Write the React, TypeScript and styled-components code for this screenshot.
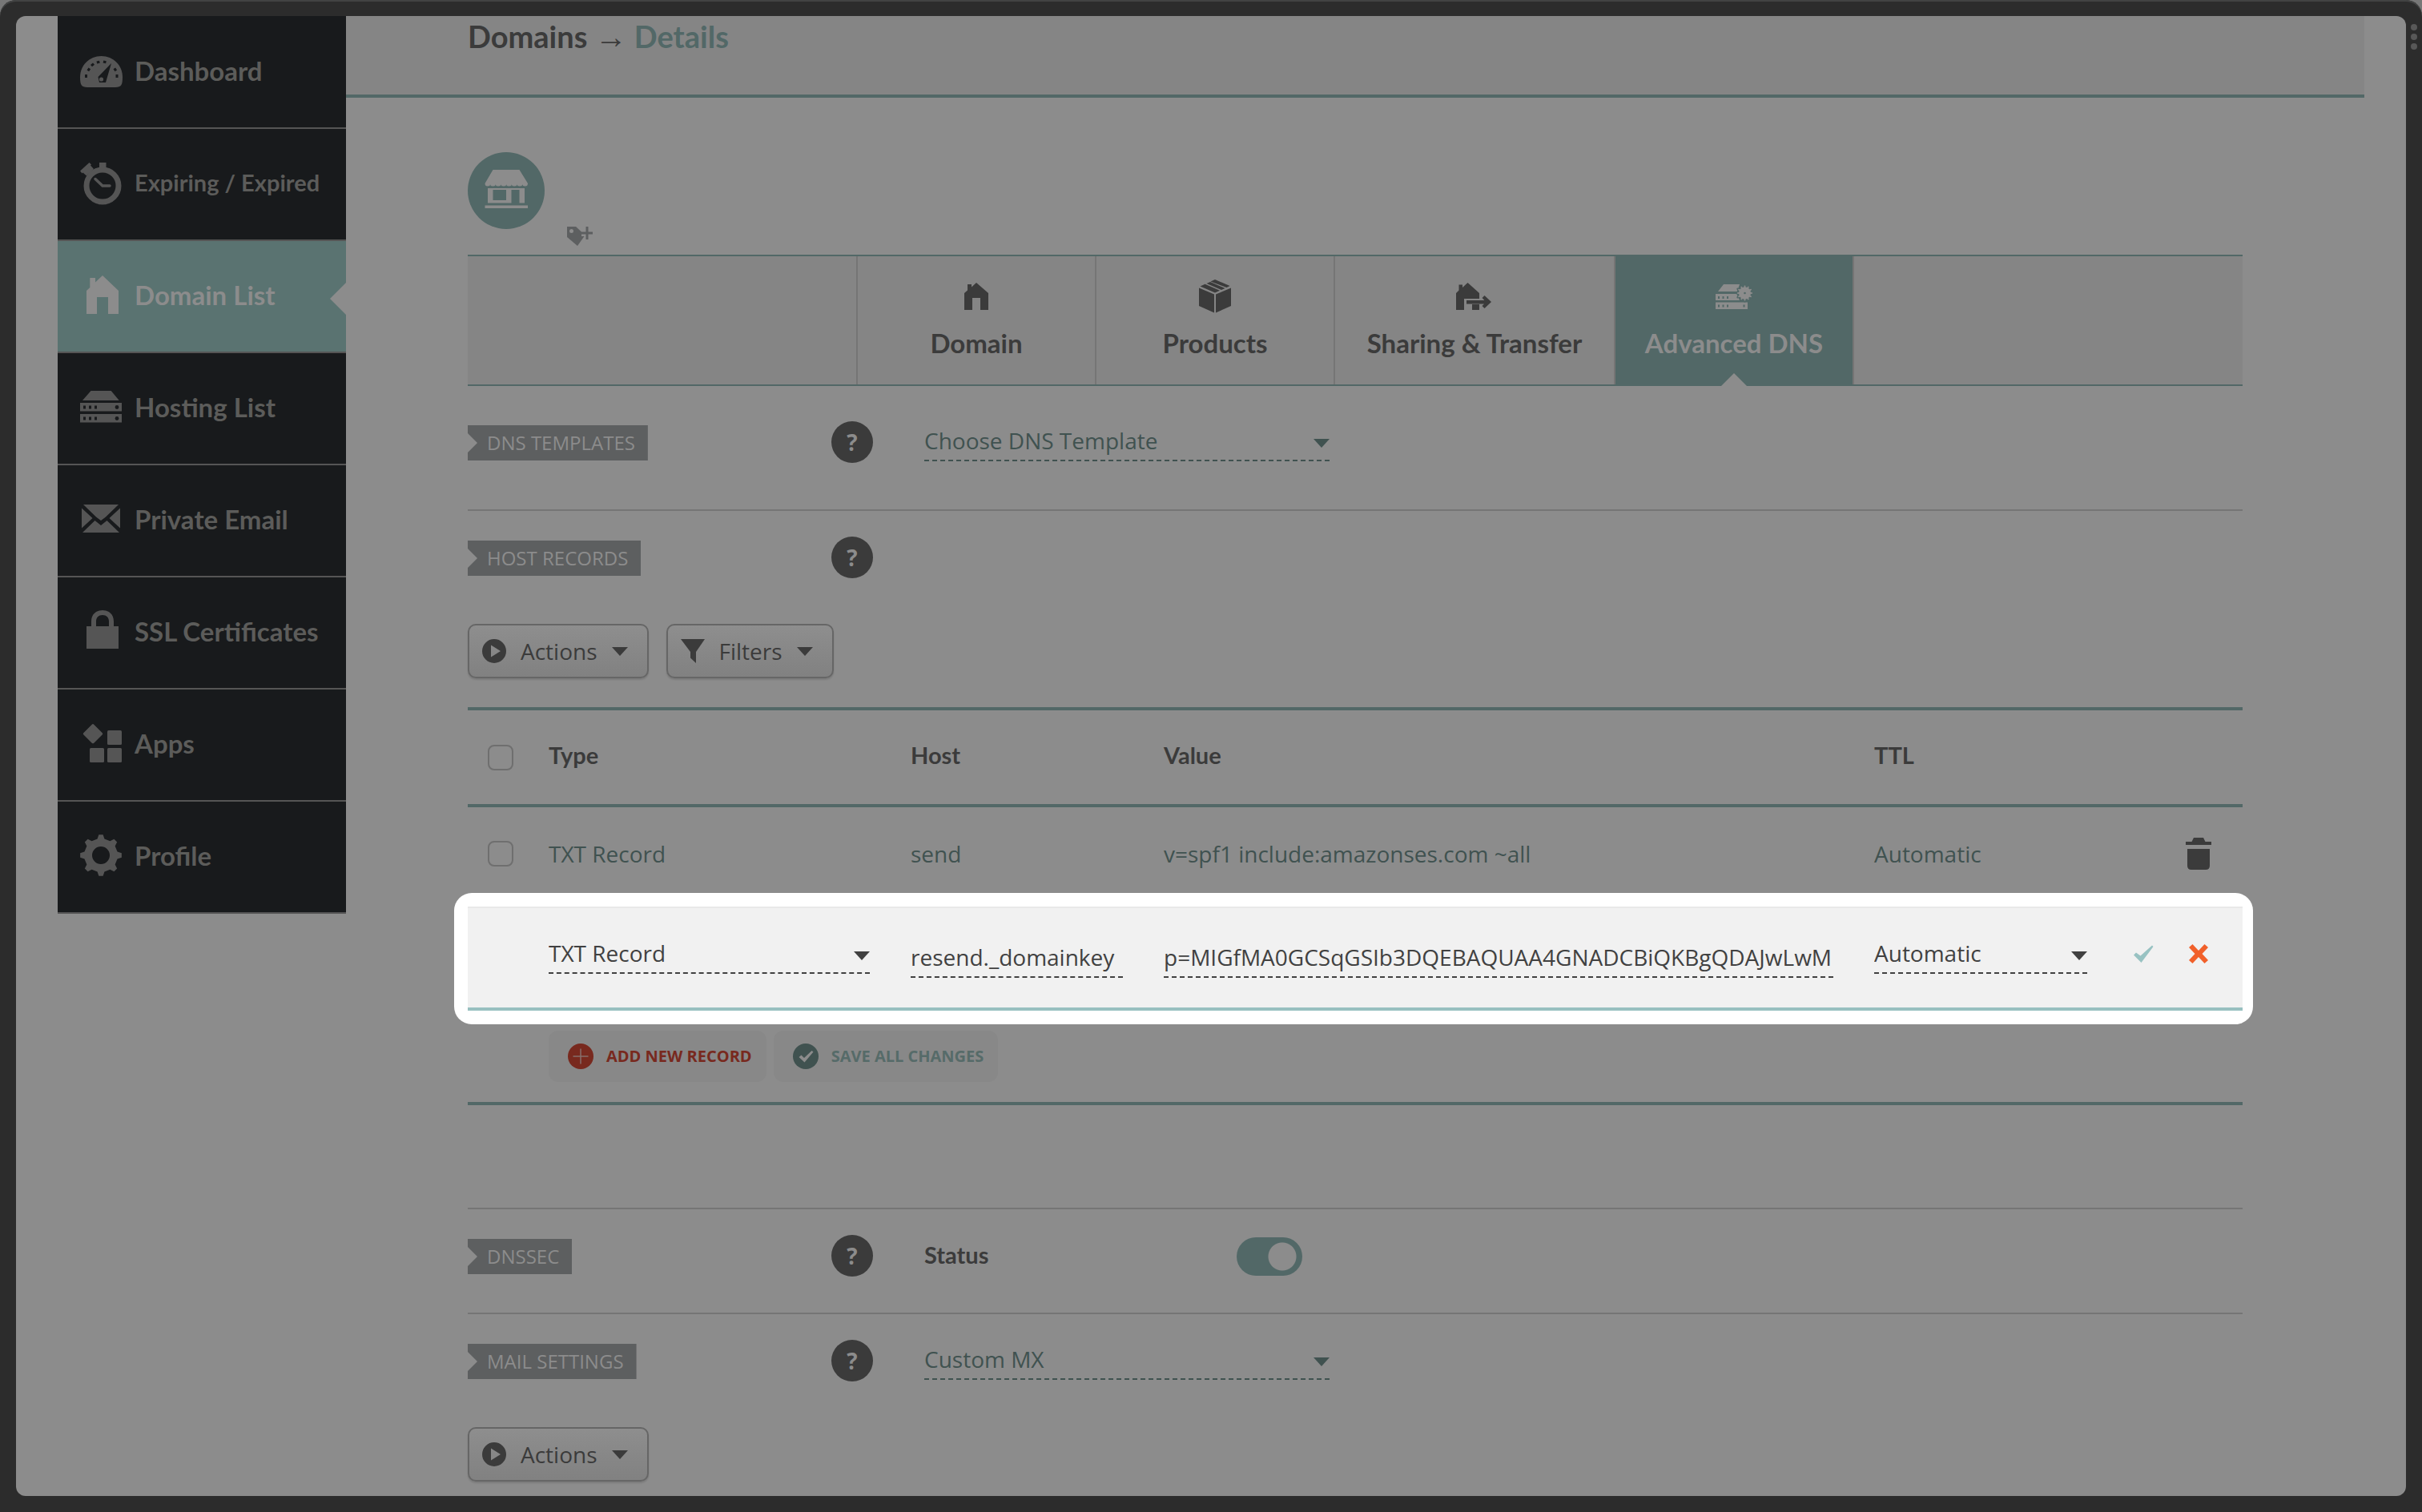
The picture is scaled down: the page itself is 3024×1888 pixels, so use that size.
import React from "react";
import styled, { createGlobalStyle, css } from "styled-components";

const color = {
  frame: "#2c2c2c",
  page: "#8c8c8c",
  band: "#858585",
  rule: "#757575",
  teal: "#526867",
  tealText: "#405250",
  ink: "#3b3b3b",
  tag: "#5d5f60",
  nav: "#181a1c",
  navText: "#5c5c5a",
  navIcon: "#555555",
};

const displayFont = `Lato, "Open Sans", sans-serif`;

const GlobalStyle = createGlobalStyle`
  *, *::before, *::after { box-sizing: border-box; }
  body {
    margin: 0;
    background: #777777;
    color: ${color.ink};
    font-family: "Open Sans", "Noto Sans", sans-serif;
    font-size: 28px;
    line-height: 40px;
  }
  button, input, select { font: inherit; color: inherit; margin: 0; }
`;

/* ---------- window ---------- */

const Frame = styled.div`
  position: relative;
  min-height: 100vh;
  display: flex;
  padding: 20px;
  background: ${color.frame};
  border-radius: 20px 20px 0 0;
  box-shadow: inset 0 2px 0 #424343;
`;

const FrameDots = styled.svg`
  position: absolute;
  top: 28px;
  right: 5px;
  width: 10px;
  height: 36px;
  fill: #585858;
`;

const Page = styled.div`
  flex: 1;
  display: flex;
  align-items: flex-start;
  padding: 0 52px;
  background: ${color.page};
  border-radius: 12px;
  overflow: hidden;
`;

/* ---------- sidebar ---------- */

const Sidebar = styled.nav`
  flex: none;
  width: 360px;
  padding-top: 1px;
  background: ${color.nav};
`;

const NavLink = styled.a<{ $active?: boolean; $small?: boolean }>`
  position: relative;
  display: flex;
  align-items: center;
  gap: 14px;
  height: 140px;
  padding-left: 26px;
  border-bottom: 2px solid ${color.navIcon};
  background: ${(p) => (p.$active ? "#5a7371" : color.nav)};
  color: ${(p) => (p.$active ? color.page : color.navText)};
  font-family: ${displayFont};
  font-size: ${(p) => (p.$small ? 29 : 33)}px;
  font-weight: 700;
  text-decoration: none;
  white-space: nowrap;

  svg {
    flex: none;
    width: 56px;
    height: 56px;
    fill: ${(p) => (p.$active ? color.page : color.navIcon)};
    --cut: ${(p) => (p.$active ? "#5a7371" : color.nav)};
  }

  ${(p) =>
    p.$active &&
    css`
      &::after {
        content: "";
        position: absolute;
        right: 0;
        top: 52px;
        border: 20px solid transparent;
        border-right-color: ${color.page};
        border-left-width: 0;
      }
    `}
`;

const DisplayLabel = styled.span`
  padding-bottom: 4px;
`;

/* ---------- main column ---------- */

const Main = styled.main`
  flex: 1;
  min-width: 0;
`;

const TitleBar = styled.header`
  padding: 5px 152px 53px;
  background: ${color.band};
  border-bottom: 4px solid ${color.teal};
`;

const Title = styled.h1`
  margin: 0;
  font-family: ${displayFont};
  font-size: 38px;
  line-height: 40px;
  font-weight: 700;

  span {
    font-family: "Liberation Sans", sans-serif;
    font-size: 40px;
    line-height: 0;
    font-weight: 400;
  }
  em {
    font-style: normal;
    color: ${color.teal};
  }
`;

const Content = styled.div`
  padding: 0 152px 17px;
`;

const DomainHead = styled.div`
  display: flex;
  align-items: flex-end;
  gap: 28px;
  padding: 68px 0 11px;
`;

const StoreIcon = styled.svg`
  width: 96px;
  height: 96px;
  margin-bottom: 21px;
  fill: ${color.page};
`;

const TagButton = styled.button`
  display: flex;
  padding: 0;
  border: 0;
  background: none;

  svg {
    width: 32px;
    height: 24px;
    fill: ${color.tag};
  }
`;

const Tabs = styled.nav`
  display: grid;
  grid-template-columns: 298px 298px 350px 300px;
  justify-content: center;
  background: ${color.band};
  border-top: 2px solid ${color.teal};
  border-bottom: 2px solid ${color.teal};
`;

const Tab = styled.a<{ $active?: boolean }>`
  position: relative;
  display: flex;
  flex-direction: column;
  align-items: center;
  gap: 14px;
  height: 160px;
  padding-top: 26px;
  border-left: 2px solid ${color.rule};
  background: ${(p) => (p.$active ? color.teal : "transparent")};
  color: ${(p) => (p.$active ? color.page : color.ink)};
  font-family: ${displayFont};
  font-size: 33px;
  line-height: 40px;
  font-weight: 700;
  text-decoration: none;
  white-space: nowrap;

  &:last-child {
    border-right: 2px solid ${color.rule};
  }

  svg {
    width: 48px;
    height: 48px;
    fill: currentColor;
    --cut: ${(p) => (p.$active ? color.teal : color.band)};
  }

  ${(p) =>
    p.$active &&
    css`
      &::after {
        content: "";
        position: absolute;
        bottom: -2px;
        left: 50%;
        margin-left: -16px;
        border: 16px solid transparent;
        border-top-width: 0;
        border-bottom-color: ${color.page};
      }
    `}
`;

const Section = styled.section<{ $top?: number; $bottom?: number; $ruled?: boolean }>`
  padding: ${(p) => p.$top ?? 32}px 0 ${(p) => p.$bottom ?? 0}px;
  border-bottom: ${(p) => (p.$ruled ? `2px solid ${color.rule}` : "0")};
`;

const SectionRow = styled.div`
  display: grid;
  grid-template-columns: 454px 116px 506px 1fr;
  align-items: start;
`;

const SectionTag = styled.h2`
  justify-self: start;
  margin: 5px 0 0;
  padding: 0 16px 0 24px;
  background: ${color.tag};
  color: ${color.page};
  clip-path: polygon(0 0, 100% 0, 100% 100%, 0 100%, 0 34px, 12px 22px, 0 10px);
  font-size: 24px;
  line-height: 44px;
  font-weight: 400;
  text-transform: uppercase;
`;

const Help = styled.button`
  width: 52px;
  height: 52px;
  padding: 0;
  border: 0;
  border-radius: 50%;
  background: ${color.ink};
  color: ${color.page};
  font-size: 28px;
  font-weight: 700;
`;

const Picker = styled.span<{ $dark?: boolean }>`
  position: relative;
  display: block;
  color: ${(p) => (p.$dark ? "#414141" : color.tealText)};

  select {
    display: block;
    appearance: none;
    width: 100%;
    height: 50px;
    padding: 0 28px 0 0;
    border: 0;
    border-bottom: 2px dashed currentColor;
    border-radius: 0;
    background: none;
  }

  svg {
    position: absolute;
    right: 0;
    top: 22px;
    pointer-events: none;
  }
`;

const CaretIcon = styled.svg`
  width: 20px;
  height: 11px;
  fill: currentColor;
`;

const StatusRow = styled.label`
  display: flex;
  justify-content: space-between;
  align-items: center;
  height: 54px;
  margin-bottom: -2px;
  padding-right: 34px;
  font-family: ${displayFont};
  font-size: 29px;
  font-weight: 700;
`;

const Toggle = styled.input`
  appearance: none;
  width: 82px;
  height: 48px;
  border-radius: 24px;
  background: radial-gradient(circle at 57px 24px, ${color.page} 17px, ${color.teal} 18px);
`;

const ButtonRow = styled.div<{ $bottom?: number }>`
  display: flex;
  gap: 22px;
  padding: 57px 0 ${(p) => p.$bottom ?? 0}px;
`;

const MenuButton = styled.button`
  display: flex;
  align-items: center;
  gap: 18px;
  height: 68px;
  padding: 0 24px 0 16px;
  border: 2px solid #666666;
  border-radius: 10px;
  background: linear-gradient(#8e8e8e, #818181);
  box-shadow: 0 2px 2px rgba(0, 0, 0, 0.12);

  svg:first-child {
    width: 30px;
    height: 30px;
    fill: ${color.ink};
  }
`;

/* ---------- records table ---------- */

const Records = styled.table`
  width: 100%;
  table-layout: fixed;
  border-spacing: 0;
  border-top: 4px solid ${color.teal};

  th,
  td {
    padding: 0;
    text-align: left;
    vertical-align: middle;
  }

  thead th {
    height: 121px;
    padding-bottom: 6px;
    border-bottom: 4px solid ${color.teal};
    font-family: ${displayFont};
    font-size: 29px;
    font-weight: 700;
  }

  thead th:first-child {
    padding-bottom: 0;
  }
`;

const Col = styled.col<{ $w?: number }>`
  width: ${(p) => (p.$w ? `${p.$w}px` : "auto")};
`;

const DataRow = styled.tr`
  color: ${color.tealText};

  td {
    height: 124px;
    padding-bottom: 8px;
  }
`;

const EditRow = styled.tr`
  position: relative;
  z-index: 1;
  color: #414141;

  && td {
    height: 130px;
    background: #f1f1f1;
    border-top: 2px solid #e9e9e9;
    border-bottom: 4px solid #98c0c0;
    vertical-align: top;
  }

  td:first-child::before {
    content: "";
    position: absolute;
    z-index: -1;
    inset: -17px -13px -17px -17px;
    border-radius: 22px;
    background: #ffffff;
  }
`;

const EditCell = styled.td<{ $kind?: "select" | "text"; $right?: number }>`
  && {
    padding-top: ${(p) => (p.$kind === "text" ? 37 : 32)}px;
    padding-right: ${(p) => p.$right ?? 0}px;
  }
`;

const TextField = styled.input`
  display: block;
  width: 100%;
  height: 50px;
  padding: 0;
  border: 0;
  border-bottom: 2px dashed currentColor;
  border-radius: 0;
  background: none;
`;

const Check = styled.input`
  display: block;
  appearance: none;
  width: 32px;
  height: 32px;
  margin-left: 25px;
  border: 2px solid #6f6f6f;
  border-radius: 8px;
`;

const IconGroup = styled.div`
  display: flex;
  justify-content: flex-end;
  align-items: center;
  gap: 37px;
  height: 50px;
  padding-right: 39px;
`;

const IconButton = styled.button<{ $tone: string }>`
  display: flex;
  padding: 0;
  border: 0;
  background: none;

  svg {
    width: 32px;
    height: 40px;
    fill: ${(p) => p.$tone};
  }
`;

const FooterCell = styled.td`
  && {
    padding: 25px 0 25px 101px;
    border-bottom: 4px solid ${color.teal};
  }
`;

const FooterButtons = styled.div`
  display: flex;
  gap: 9px;
`;

const PillButton = styled.button<{ $tone: string }>`
  display: flex;
  align-items: center;
  gap: 16px;
  height: 64px;
  padding: 0 18px 0 24px;
  border: 0;
  border-radius: 12px;
  background: #888888;
  color: ${(p) => p.$tone};
  font-size: 20px;
  font-weight: 700;
  text-transform: uppercase;

  svg {
    width: 32px;
    height: 32px;
  }
`;

/* ---------- drawings ---------- */

function gearPath(cx: number, cy: number, outer: number, inner: number, teeth: number, hole: number) {
  const step = (Math.PI * 2) / teeth;
  const at = (r: number, a: number) => `${(cx + r * Math.sin(a)).toFixed(2)} ${(cy - r * Math.cos(a)).toFixed(2)}`;
  let d = "";
  for (let i = 0; i < teeth; i++) {
    const a = i * step;
    d += `${i ? "L" : "M"}${at(inner, a - step * 0.27)}L${at(outer, a - step * 0.13)}L${at(outer, a + step * 0.13)}L${at(inner, a + step * 0.27)}`;
  }
  return `${d}ZM${cx - hole} ${cy}a${hole} ${hole} 0 1 0 ${hole * 2} 0a${hole} ${hole} 0 1 0 ${-hole * 2} 0Z`;
}

const Caret = () => (
  <CaretIcon viewBox="0 0 20 11" aria-hidden="true">
    <path d="M0 0h20L10 11z" />
  </CaretIcon>
);

const DashboardIcon = () => (
  <svg viewBox="0 0 56 56" aria-hidden="true">
    <path d="M28.500 8C43.500 8 55 19.500 55 34.500c0 9-1.500 12.500-9 12.500H11c-7.500 0-9-3.500-9-12.500C2 19.500 13.500 8 28.500 8z" />
    <g style={{ fill: "var(--cut)" }}>
      <path d="M41 17L34 41h-8l-1.500-7z" />
      <path d="M8 31h3v4H8zM46.500 31h3v4h-3zM10.500 25.500l2-3 2.600 1.700-2 3zM15 19l3-2.600 2 2.400-3 2.500zM22.500 14.500l3.500-.8.700 3-3.500.8zM31.300 13.500l3.500.8-.7 3-3.500-.8zM43.500 24.200l2.600-1.700 2 3-2.600 1.700z" />
    </g>
    <circle cx="28.500" cy="37" r="2.600" />
  </svg>
);

const StopwatchIcon = () => (
  <svg viewBox="0 0 56 56" aria-hidden="true">
    <path d="M26 1h8.500v8H26zM2 11.500L13.500 1l2.500 2.500-1 1 4 4.500-9 8.500-4.500-4-1 1z" />
    <circle cx="30" cy="30" r="20" fill="none" stroke={color.navIcon} strokeWidth="7" />
    <path d="M21 21.500L30 30h9" fill="none" stroke={color.navIcon} strokeWidth="3.500" strokeLinecap="round" />
  </svg>
);

const HouseIcon = () => (
  <svg viewBox="0 0 56 56" aria-hidden="true">
    <path d="M30 2l20 19v29H37V29H23v21H10V21l4.300-4V5H21v5.500z" />
  </svg>
);

const ServerIcon = () => (
  <svg viewBox="0 0 56 56" aria-hidden="true">
    <path d="M15.500 6h25.200L50.700 18H5zM2 21h52v10.500H2zM2 35h52v10.500H2z" />
    <g style={{ fill: "var(--cut)" }}>
      <path d="M6 24.500h3v4H6zM13 24.500h3v4h-3zM20 24.500h3v4h-3zM6 38.500h3v4H6zM13 38.500h3v4h-3zM20 38.500h3v4h-3z" />
      <circle cx="48" cy="26.500" r="2.400" />
      <circle cx="48" cy="40.500" r="2.400" />
    </g>
  </svg>
);

const MailIcon = () => (
  <svg viewBox="0 0 56 56" aria-hidden="true">
    <path d="M6 8h44L34 23.500l-6 4.500-6-4.500zM4 12.500l13.500 12.500L4 37.500zM52 12.500v25L38.500 25zM5 43l15.500-15 7.500 6 7.500-6L51 43z" />
  </svg>
);

const LockIcon = () => (
  <svg viewBox="0 0 56 56" aria-hidden="true">
    <path d="M16 20v-6C16 5 22 0 30 0s14 5 14 14v6h6v28H10V20zM22 20h16v-6c0-5-3-8-8-8s-8 3-8 8z" fillRule="evenodd" />
  </svg>
);

const AppsIcon = () => (
  <svg viewBox="0 0 56 56" aria-hidden="true">
    <path d="M16.700 2.700q1.300-1.300 2.600 0l10.500 10.500q1 1 0 2L19.300 25.700q-1.300 1.300-2.600 0L6.200 15.200q-1-1 0-2z" />
    <rect x="36" y="10" width="18" height="18" rx="1.500" />
    <rect x="14" y="32" width="18" height="18" rx="1.500" />
    <rect x="36" y="32" width="18" height="18" rx="1.500" />
  </svg>
);

const GearIcon = () => (
  <svg viewBox="0 0 56 56" aria-hidden="true">
    <path d={gearPath(28, 26, 26, 21, 8, 11)} fillRule="evenodd" />
  </svg>
);

const TabHouse = () => (
  <svg viewBox="0 0 48 48" aria-hidden="true">
    <path d="M24 7l15 13v21H29V26H19v15H9V20l4-3.500V9h5v3.500z" />
  </svg>
);

const TabBox = () => (
  <svg viewBox="0 0 48 48" aria-hidden="true">
    <path d="M4 13.500l19 8v23L4 36zM44 13.500l-19 8v23L44 36z" />
    <path d="M5.500 11.500l6-2.700 18.500 8-6 2.700zM13.500 8l4.500-2 18.500 8-4.500 2zM18.500 5.500L24 3l18.500 8-4 2z" />
  </svg>
);

const TabTransfer = () => (
  <svg viewBox="0 0 48 48" aria-hidden="true">
    <path d="M15.500 7L30 20v7H11v14H1V20l3.500-3.500V9.500H9v3.500zM21 34h9v7h-9z" />
    <path d="M14 29h22v-.5L33.500 26l3-3 8.500 8-8.500 8-3-3 2.500-2.500H14z" />
  </svg>
);

const TabServer = () => (
  <svg viewBox="0 0 48 48" aria-hidden="true">
    <path d="M11 9h20l-3 9H4zM1 21h27l3 8H1zM1 31.500h40V40H1z" />
    <path d={gearPath(37.5, 20, 11.5, 10, 12, 0.1)} style={{ fill: "var(--cut)" }} />
    <path d={gearPath(37.5, 20, 9.5, 7.5, 12, 1.3)} fillRule="evenodd" />
    <path d="M4 24h2v3H4zM9.500 24h2v3h-2zM15 24h2v3h-2zM4 34.500h2v3H4zM9.500 34.500h2v3h-2zM15 34.500h2v3h-2zM35.500 34.500h2v3h-2z" style={{ fill: "var(--cut)" }} />
  </svg>
);

const PlayIcon = () => (
  <svg viewBox="0 0 30 30" aria-hidden="true">
    <path d="M15 0a15 15 0 1 1 0 30a15 15 0 1 1 0-30zM11 7.500v15L23 15z" fillRule="evenodd" />
  </svg>
);

const FunnelIcon = () => (
  <svg viewBox="0 0 30 30" aria-hidden="true">
    <path d="M0 0h30L19 16v14l-7-6.500V16z" />
  </svg>
);

const TrashIcon = () => (
  <svg viewBox="0 0 32 40" aria-hidden="true">
    <path d="M10 0h12l2.500 5H32v4H0V5h7.500zM2 14h28v21q0 5-5 5H7q-5 0-5-5z" />
  </svg>
);

const TickIcon = () => (
  <svg viewBox="0 0 32 40" aria-hidden="true">
    <path d="M4 21.500l3-3 5.500 4L27 9.500l1.500 1.500L13.500 31z" />
  </svg>
);

const CrossIcon = () => (
  <svg viewBox="0 0 32 40" aria-hidden="true">
    <path d="M4 12l4.500-4 7.500 8 7.500-8 4.500 4-7.500 8 7.500 8-4.500 4-7.500-8-7.500 8L4 28l7.500-8z" />
  </svg>
);

/* ---------- page ---------- */

const navItems = [
  { label: "Dashboard", Icon: DashboardIcon },
  { label: "Expiring / Expired", Icon: StopwatchIcon, small: true },
  { label: "Domain List", Icon: HouseIcon, active: true },
  { label: "Hosting List", Icon: ServerIcon },
  { label: "Private Email", Icon: MailIcon },
  { label: "SSL Certificates", Icon: LockIcon },
  { label: "Apps", Icon: AppsIcon },
  { label: "Profile", Icon: GearIcon },
];

const tabItems = [
  { label: "Domain", Icon: TabHouse },
  { label: "Products", Icon: TabBox },
  { label: "Sharing & Transfer", Icon: TabTransfer },
  { label: "Advanced DNS", Icon: TabServer, active: true },
];

const Dropdown = ({ name, value, dark }: { name: string; value: string; dark?: boolean }) => (
  <Picker $dark={dark}>
    <select aria-label={name} defaultValue={value}>
      <option>{value}</option>
    </select>
    <Caret />
  </Picker>
);

const SectionHead = ({ title, children }: { title: string; children?: React.ReactNode }) => (
  <SectionRow>
    <SectionTag>{title}</SectionTag>
    <Help type="button" aria-label={`Help: ${title}`}>
      ?
    </Help>
    {children}
  </SectionRow>
);

const ActionsButton = () => (
  <MenuButton type="button">
    <PlayIcon />
    Actions
    <Caret />
  </MenuButton>
);

export default function App() {
  return (
    <>
      <GlobalStyle />
      <Frame>
        <FrameDots viewBox="0 0 10 36" aria-hidden="true">
          <circle cx="5" cy="6" r="4" />
          <circle cx="5" cy="18" r="4" />
          <circle cx="5" cy="30" r="4" />
        </FrameDots>
        <Page>
          <Sidebar>
            {navItems.map(({ label, Icon, active, small }) => (
              <NavLink key={label} href="#" $active={active} $small={small}>
                <Icon />
                <DisplayLabel>{label}</DisplayLabel>
              </NavLink>
            ))}
          </Sidebar>
          <Main>
            <TitleBar>
              <Title>
                Domains <span>→</span> <em>Details</em>
              </Title>
            </TitleBar>
            <Content>
              <DomainHead>
                <StoreIcon viewBox="0 0 96 96" aria-hidden="true">
                  <circle cx="48" cy="48" r="48" fill={color.teal} />
                  <path d="M31.500 22h33L75 39q0 3.500-3.300 3.500T68.300 40q0 2.500-3.400 2.500T61.600 40q0 2.500-3.400 2.500T54.900 40q0 2.500-3.400 2.500T48.200 40q0 2.500-3.400 2.500T41.500 40q0 2.500-3.400 2.500T34.800 40q0 2.500-3.400 2.500T28.100 40q0 2.500-3.300 2.500T21.500 39z" />
                  <path d="M25 45h46v18.500H25zM31.500 47v13H48V47zM54.500 47v16.500h10V47zM21.500 66.500H75V70H21.500z" fillRule="evenodd" />
                </StoreIcon>
                <TagButton type="button" aria-label="Add tag">
                  <svg viewBox="0 0 32 24" aria-hidden="true">
                    <path d="M0 0h11l7 6.500v5.500h3.500L13 24 0 13zM5.500 3a2.500 2.500 0 1 0 0 5a2.500 2.500 0 1 0 0-5z" fillRule="evenodd" />
                    <path d="M23.500 0h3v6.500H32v3h-5.500V16h-3V9.500H18v-3h5.500z" />
                  </svg>
                </TagButton>
              </DomainHead>
              <Tabs>
                {tabItems.map(({ label, Icon, active }) => (
                  <Tab key={label} href="#" $active={active}>
                    <Icon />
                    {label}
                  </Tab>
                ))}
              </Tabs>

              <Section $top={44} $bottom={58} $ruled>
                <SectionHead title="DNS Templates">
                  <Dropdown name="DNS template" value="Choose DNS Template" />
                </SectionHead>
              </Section>

              <Section $bottom={128} $ruled>
                <SectionHead title="Host Records" />
                <ButtonRow $bottom={36}>
                  <ActionsButton />
                  <MenuButton type="button">
                    <FunnelIcon />
                    Filters
                    <Caret />
                  </MenuButton>
                </ButtonRow>
                <Records>
                  <colgroup>
                    <Col $w={101} />
                    <Col $w={452} />
                    <Col $w={316} />
                    <Col />
                    <Col $w={299} />
                    <Col $w={161} />
                  </colgroup>
                  <thead>
                    <tr>
                      <th>
                        <Check type="checkbox" aria-label="Select all records" />
                      </th>
                      <th>Type</th>
                      <th>Host</th>
                      <th>Value</th>
                      <th>TTL</th>
                      <th />
                    </tr>
                  </thead>
                  <tbody>
                    <DataRow>
                      <td>
                        <Check type="checkbox" aria-label="Select record send" />
                      </td>
                      <td>TXT Record</td>
                      <td>send</td>
                      <td>v=spf1 include:amazonses.com ~all</td>
                      <td>Automatic</td>
                      <td>
                        <IconGroup>
                          <IconButton type="button" aria-label="Delete record" $tone={color.ink}>
                            <TrashIcon />
                          </IconButton>
                        </IconGroup>
                      </td>
                    </DataRow>
                    <EditRow>
                      <td />
                      <EditCell $right={51}>
                        <Dropdown dark name="Record type" value="TXT Record" />
                      </EditCell>
                      <EditCell $kind="text" $right={51}>
                        <TextField aria-label="Host" defaultValue="resend._domainkey" />
                      </EditCell>
                      <EditCell $kind="text" $right={51}>
                        <TextField aria-label="Value" defaultValue="p=MIGfMA0GCSqGSIb3DQEBAQUAA4GNADCBiQKBgQDAJwLwM" />
                      </EditCell>
                      <EditCell $right={33}>
                        <Dropdown dark name="TTL" value="Automatic" />
                      </EditCell>
                      <EditCell>
                        <IconGroup>
                          <IconButton type="button" aria-label="Save record" $tone="#98c2c2">
                            <TickIcon />
                          </IconButton>
                          <IconButton type="button" aria-label="Discard record" $tone="#f1602a">
                            <CrossIcon />
                          </IconButton>
                        </IconGroup>
                      </EditCell>
                    </EditRow>
                    <tr>
                      <FooterCell colSpan={6}>
                        <FooterButtons>
                          <PillButton type="button" $tone="#78291e">
                            <svg viewBox="0 0 32 32" aria-hidden="true">
                              <circle cx="16" cy="16" r="16" fill="#78291e" />
                              <path d="M16 6.500v19M6.500 16h19" stroke={color.page} strokeOpacity="0.7" strokeWidth="1.500" />
                            </svg>
                            Add new record
                          </PillButton>
                          <PillButton type="button" $tone="#566b69">
                            <svg viewBox="0 0 32 32" aria-hidden="true">
                              <circle cx="16" cy="16" r="16" fill={color.tealText} />
                              <path d="M7.500 17l3-2.500 3.500 3.500 9.500-9 2 1.500L14.500 23.500z" fill={color.page} />
                            </svg>
                            Save all changes
                          </PillButton>
                        </FooterButtons>
                      </FooterCell>
                    </tr>
                  </tbody>
                </Records>
              </Section>

              <Section $bottom={45} $ruled>
                <SectionHead title="DNSSEC">
                  <StatusRow>
                    <DisplayLabel>Status</DisplayLabel>
                    <Toggle type="checkbox" defaultChecked />
                  </StatusRow>
                </SectionHead>
              </Section>

              <Section>
                <SectionHead title="Mail Settings">
                  <Dropdown name="Mail settings" value="Custom MX" />
                </SectionHead>
                <ButtonRow>
                  <ActionsButton />
                </ButtonRow>
              </Section>
            </Content>
          </Main>
        </Page>
      </Frame>
    </>
  );
}
